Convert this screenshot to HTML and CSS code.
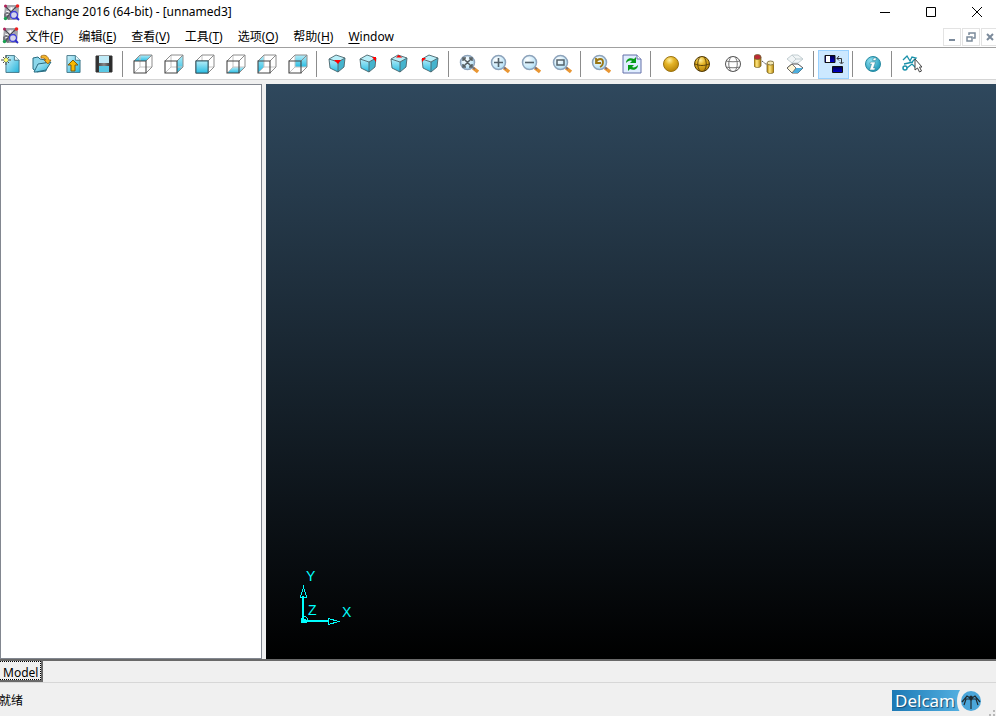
FILE: index.html
```html
<!DOCTYPE html>
<html lang="zh-CN">
<head>
<meta charset="utf-8">
<title>Exchange 2016 (64-bit) - [unnamed3]</title>
<link rel="stylesheet" href="styles.css">
</head>
<body>
<svg class="defs" aria-hidden="true">
  <defs>
    <linearGradient id="cyan" x1="0" y1="0" x2="1" y2="1"><stop offset="0" stop-color="#d3f3fb"/><stop offset="1" stop-color="#22b4dc"/></linearGradient>
    <linearGradient id="face" x1="0" y1="0" x2="0" y2="1"><stop offset="0" stop-color="#b4edf9"/><stop offset="1" stop-color="#28bce2"/></linearGradient>
    <linearGradient id="steel" x1="0" y1="0" x2="1" y2="0"><stop offset="0" stop-color="#333"/><stop offset=".5" stop-color="#888"/><stop offset="1" stop-color="#222"/></linearGradient>
    <linearGradient id="tube" x1="0" y1="0" x2="1" y2="0"><stop offset="0" stop-color="#b88700"/><stop offset=".4" stop-color="#ffe680"/><stop offset="1" stop-color="#a87800"/></linearGradient>
    <linearGradient id="navy" x1="0" y1="0" x2="0" y2="1"><stop offset="0" stop-color="#000040"/><stop offset="1" stop-color="#0000d8"/></linearGradient>
    <radialGradient id="gold" cx=".4" cy=".25" r=".75"><stop offset="0" stop-color="#fff0a0"/><stop offset=".4" stop-color="#e5b528"/><stop offset="1" stop-color="#b98508"/></radialGradient>
    <radialGradient id="glass" cx=".35" cy=".3" r=".8"><stop offset="0" stop-color="#fff"/><stop offset="1" stop-color="#a9dcf5"/></radialGradient>
    <radialGradient id="info" cx=".35" cy=".3" r=".8"><stop offset="0" stop-color="#8fe0f0"/><stop offset="1" stop-color="#1593b5"/></radialGradient>
    <symbol id="app" viewBox="0 0 17 17">
      <path d="M2 1h12l2 3-1 12H5L1 12z" fill="#a4a4aa"/>
      <path d="M1 10l6-4 3 5-4 5-5-3z" fill="#77777f"/>
      <path d="M4 4l7-1 1 3-6 3z" fill="#e4e4e6"/><path d="M3 7l3 1M3 11l4-1M8 3l1 3" stroke="#fff"/>
      <path d="M14 2L8 8l-5 7M2 2l6 6" stroke="#4a4a55" stroke-width="1.2" fill="none"/>
      <circle cx="11" cy="11" r="3.500" fill="#d5d5ea" stroke="#4040d8" stroke-width="1.300"/>
      <path d="M13 13l3 3" stroke="#2a2acb" stroke-width="1.800"/>
      <circle cx="2.500" cy="2" r="1.500" fill="#b02058"/><circle cx="14.500" cy="2" r="1.800" fill="#e22"/><circle cx="2.500" cy="14.500" r="1.700" fill="#18a050"/>
    </symbol>
    <symbol id="wire" viewBox="0 0 20 20">
      <path d="M7 13V1M7 13h12M7 13l-6 6" fill="none" stroke="#c4c4c4"/>
      <path d="M1 7l6-6h12v12l-6 6M13 7l6-6" fill="none" stroke="#8c8c8c"/>
      <path d="M1 7h12v12H1z" fill="none" stroke="#444" stroke-width="1.100"/>
    </symbol>
    <symbol id="cube" viewBox="0 0 20 20">
      <path d="M2 5l7-4 9 3-7 4z" fill="#b9eff9"/><path d="M2 5l9 3v10l-8-4z" fill="url(#face)"/><path d="M11 8l7-4-1 9-6 5z" fill="#45b4ce"/>
      <path d="M2 5l7-4 9 3-1 9-6 5-8-4zM2 5l9 3 7-4M11 8v10" fill="none" stroke="#4a646c" stroke-width=".9"/>
    </symbol>
    <symbol id="lens" viewBox="0 0 20 20">
      <path d="M14 14l5 4" stroke="#e99633" stroke-width="3.500"/><path d="M13 13l3 2" stroke="#806f72" stroke-width="2"/>
      <circle cx="8.500" cy="8.500" r="7" fill="url(#glass)" stroke="#8da3bb" stroke-width="1.500"/>
    </symbol>
    <symbol id="sheet" viewBox="0 0 16 20"><path d="M1 1h9l5 5v13H1z" fill="url(#cyan)" stroke="#437687"/><path d="M10 1v5h5" fill="#e5f8fc" stroke="#437687"/></symbol>
  </defs>
</svg>

<header class="titlebar">
  <svg class="app-icon"><use href="#app"/></svg>
  <h1 class="title">Exchange 2016 (64-bit) - [unnamed3]</h1>
  <div class="caption-buttons">
    <button type="button" aria-label="Minimize"><svg viewBox="0 0 12 12"><path d="M1 6.500h10" /></svg></button>
    <button type="button" aria-label="Maximize"><svg viewBox="0 0 12 12"><path d="M1.500 1.500h9v9h-9z"/></svg></button>
    <button type="button" aria-label="Close"><svg viewBox="0 0 12 12"><path d="M1 1l10 10M11 1L1 11"/></svg></button>
  </div>
</header>

<nav class="menubar">
  <svg class="app-icon"><use href="#app"/></svg>
  <div class="menus">
    <button type="button">文件(<u>F</u>)</button>
    <button type="button">编辑(<u>E</u>)</button>
    <button type="button">查看(<u>V</u>)</button>
    <button type="button">工具(<u>T</u>)</button>
    <button type="button">选项(<u>O</u>)</button>
    <button type="button">帮助(<u>H</u>)</button>
    <button type="button"><u>W</u>indow</button>
  </div>
  <div class="child-buttons">
    <button type="button" aria-label="Minimize document"><svg viewBox="0 0 10 10"><path d="M2 8h6"/></svg></button>
    <button type="button" aria-label="Restore document"><svg viewBox="0 0 10 10"><path d="M3 3V1h6v5H7" stroke-width="1.500"/><path d="M1 5h5v4H1z" stroke-width="1.500"/></svg></button>
    <button type="button" aria-label="Close document"><svg viewBox="0 0 10 10"><path d="M2 2l6 6M8 2L2 8"/></svg></button>
  </div>
</nav>

<div class="toolbar" role="toolbar">
  <div class="group">
    <button type="button" aria-label="New"><svg viewBox="0 0 20 20"><use href="#sheet" x="4" y="0" width="15" height="20"/><path d="M5 1v10M0 6h10M2 3l6 6M8 3L2 9" stroke="#4c4c40"/><circle cx="5" cy="6" r="2" fill="#ffff70"/></svg></button>
    <button type="button" aria-label="Open"><svg viewBox="0 0 20 20"><path d="M1 4l5-1 2 2 6 1v11l-9 1-4-3z" fill="#8cd7eb" stroke="#286b80"/><path d="M2 18L6 10l13-2-5 8-10 2z" fill="url(#cyan)" stroke="#286b80"/><path d="M9 2c4-2 7 0 8 4h2l-3 4-4-4h2c-1-2-3-2-5-2z" fill="#f5b528" stroke="#996514" stroke-width=".8"/></svg></button>
    <button type="button" aria-label="Import"><svg viewBox="0 0 20 20"><use href="#sheet" x="3" y="0" width="15" height="20"/><path d="M10 6l5 5h-3v6H8v-6H5z" fill="#f8b900" stroke="#7b5b12"/></svg></button>
    <button type="button" aria-label="Save"><svg viewBox="0 0 20 20"><path d="M2 2h16v16H2z" fill="url(#steel)" stroke="#333"/><path d="M5 2h10v7H5z" fill="#bfeaf6"/><path d="M5 12h10v6H5z" fill="#5ac8e4"/><path d="M4 2v16M16 2v16" stroke="#222"/></svg></button>
  </div>
  <div class="group">
    <button type="button" aria-label="Top view"><svg viewBox="0 0 20 20"><path d="M1 7l6-6h12l-6 6z" fill="url(#face)"/><use href="#wire" width="20" height="20"/></svg></button>
    <button type="button" aria-label="Right view"><svg viewBox="0 0 20 20"><path d="M13 7l6-6v12l-6 6z" fill="url(#face)"/><use href="#wire" width="20" height="20"/></svg></button>
    <button type="button" aria-label="Front view"><svg viewBox="0 0 20 20"><use href="#wire" width="20" height="20"/><path d="M1 7h12v12H1z" fill="url(#face)" stroke="#34616e"/></svg></button>
    <button type="button" aria-label="Bottom view"><svg viewBox="0 0 20 20"><path d="M1 19l6-6h12l-6 6z" fill="url(#face)"/><use href="#wire" width="20" height="20"/></svg></button>
    <button type="button" aria-label="Left view"><svg viewBox="0 0 20 20"><path d="M1 7l6-6v12l-6 6z" fill="url(#face)"/><use href="#wire" width="20" height="20"/></svg></button>
    <button type="button" aria-label="Back view"><svg viewBox="0 0 20 20"><path d="M7 1h12v12H7z" fill="url(#face)"/><use href="#wire" width="20" height="20"/></svg></button>
  </div>
  <div class="group">
    <button type="button" aria-label="Isometric 1"><svg viewBox="0 0 20 20"><use href="#cube" width="20" height="20"/><path d="M7 6h7l-3 4z" fill="#f00"/></svg></button>
    <button type="button" aria-label="Isometric 2"><svg viewBox="0 0 20 20"><use href="#cube" width="20" height="20"/><path d="M14 3h4v5z" fill="#f00"/></svg></button>
    <button type="button" aria-label="Isometric 3"><svg viewBox="0 0 20 20"><use href="#cube" width="20" height="20"/><path d="M7 3.500L9.500 1l4 2.500z" fill="#f00"/></svg></button>
    <button type="button" aria-label="Isometric 4"><svg viewBox="0 0 20 20"><use href="#cube" width="20" height="20"/><path d="M2 4h4L2 8z" fill="#f00"/></svg></button>
  </div>
  <div class="group">
    <button type="button" aria-label="Zoom to fit"><svg viewBox="0 0 20 20"><use href="#lens" width="20" height="20"/><path d="M5 5l7 7M12 5l-7 7M4 7V4h3M10 4h3v3M13 10v3h-3M7 13H4v-3" fill="none" stroke="#555e60" stroke-width="1.500"/></svg></button>
    <button type="button" aria-label="Zoom in"><svg viewBox="0 0 20 20"><use href="#lens" width="20" height="20"/><path d="M8.500 4v9M4 8.500h9" stroke="#53626b" stroke-width="1.600"/></svg></button>
    <button type="button" aria-label="Zoom out"><svg viewBox="0 0 20 20"><use href="#lens" width="20" height="20"/><path d="M4 8.500h9" stroke="#53626b" stroke-width="1.600"/></svg></button>
    <button type="button" aria-label="Zoom box"><svg viewBox="0 0 20 20"><use href="#lens" width="20" height="20"/><path d="M5 6h7v5H5z" fill="none" stroke="#53626b" stroke-width="1.500"/></svg></button>
  </div>
  <div class="group">
    <button type="button" aria-label="Previous view"><svg viewBox="0 0 20 20"><use href="#lens" width="20" height="20"/><path d="M5 4v5h5M5 8c2-4 7-4 7 0 0 2-1 4-3 5" fill="none" stroke="#9a7714" stroke-width="1.800"/></svg></button>
    <button type="button" aria-label="Refresh"><svg viewBox="0 0 20 20"><path d="M1 1h14l4 4v14H1z" fill="#e0edff" stroke="#6470a9"/><path d="M15 1v4h4" fill="#fff" stroke="#6470a9"/><path d="M4 9c0-4 4-6 8-4l2-2v6H8l2-2c-2-1-4 0-6 2zM16 11c0 4-4 6-8 4l-2 2v-6h6l-2 2c2 1 4 0 6-2z" fill="#079c18"/></svg></button>
  </div>
  <div class="group">
    <button type="button" aria-label="Shaded"><svg viewBox="0 0 20 20"><circle cx="10" cy="10" r="7.500" fill="url(#gold)" stroke="#9c7412"/></svg></button>
    <button type="button" aria-label="Shaded wireframe"><svg viewBox="0 0 20 20"><circle cx="10" cy="10" r="7.500" fill="url(#gold)" stroke="#533c08"/><path d="M8 3c-3 4-3 10 0 14M12 3c3 4 3 10 0 14M3 10c5 2 9 2 14 0" fill="none" stroke="#533c08" stroke-width=".9"/></svg></button>
    <button type="button" aria-label="Wireframe"><svg viewBox="0 0 20 20"><circle cx="10" cy="10" r="7.500" fill="#fff" stroke="#555"/><path d="M8 3c-3 4-3 10 0 14M12 3c3 4 3 10 0 14M3 7c4 1 10 1 14 0M3 13c4 1 10 1 14 0" fill="none" stroke="#666" stroke-width=".9"/></svg></button>
    <button type="button" aria-label="Convert solid"><svg viewBox="0 0 20 20"><path d="M0 3v9c1 2 6 2 7 0V3z" fill="url(#tube)" stroke="#71612f" stroke-width=".8"/><ellipse cx="3.500" cy="3" rx="3.500" ry="2.500" fill="#be2a35" stroke="#71612f" stroke-width=".8"/><path d="M8 7l5 4" stroke="#555" stroke-dasharray="2 1"/><path d="M13 9v9c1 2 6 2 7 0V9z" fill="url(#tube)" stroke="#71612f" stroke-width=".8"/><ellipse cx="16.500" cy="9" rx="3.500" ry="2" fill="#f4e8b4" stroke="#71612f" stroke-width=".8"/></svg></button>
    <button type="button" aria-label="Blank"><svg viewBox="0 0 20 20"><path d="M2 5l5-4h6l5 4-5 4H7z" fill="#f1f5f6" stroke="#c3ced2"/><path d="M7 1l4 4-4 4M11 5h7" fill="none" stroke="#c3ced2"/><path d="M2 14l5-4h6l5 4-5 5H7z" fill="#fff" stroke="#555"/><path d="M11 14h7l-5 5H7z" fill="#4caede"/><path d="M2 14l5-4 4 4-4 5z" fill="#fff6d6" stroke="#555" stroke-width=".8"/></svg></button>
  </div>
  <div class="group">
    <button type="button" class="selected" aria-pressed="true" aria-label="Swap background"><svg viewBox="0 0 20 20"><path d="M1 1.500h10v7H1z" fill="url(#navy)" stroke="#111"/><path d="M2 2h4v6H2z" fill="#fff"/><path d="M13 4.500h4.500V9M15 2l-2 2.500 2 2M15.500 8l2 2 2-2" fill="none" stroke="#333"/><path d="M8.500 12.500h10v6h-10z" fill="url(#navy)" stroke="#111"/></svg></button>
  </div>
  <div class="group">
    <button type="button" aria-label="Information"><svg viewBox="0 0 20 20"><circle cx="10" cy="10" r="7.500" fill="url(#info)" stroke="#298ba2"/><path d="M10.500 4h3l-.8 2.500h-3zM7.500 8h5l-2 6h2l-1 2h-5l2-6h-2z" fill="#fff" stroke="#23798c" stroke-width=".5"/></svg></button>
  </div>
  <div class="group">
    <button type="button" aria-label="Select geometry"><svg viewBox="0 0 20 20"><path d="M1 6l4-4 3 5 2-4 4 1-4 4M2 10l9-2M5 14l5-4 4 4" fill="none" stroke="#1991aa" stroke-width="1.300"/><circle cx="3" cy="14" r="2" fill="#fff" stroke="#1991aa" stroke-width="1.500"/><path d="M13 5v11l2.500-2 2 4 2-1-2-4h2.500z" fill="#fff" stroke="#444"/></svg></button>
  </div>
</div>

<main class="workspace">
  <section class="tree" aria-label="Model tree"></section>
  <section class="view" aria-label="Graphics view">
    <svg class="axes" viewBox="0 0 60 60" shape-rendering="crispEdges">
      <g fill="none" stroke="#0ff"><path d="M8 52V27M8 52h25" stroke-width="2"/><path d="M8.500 18l-3 10h6zM43.500 52.500l-10-3v6z"/><circle cx="9.500" cy="50.500" r="3"/></g><path d="M6 50h5v4H6z" fill="#0ff"/>
      <text x="11" y="12">Y</text><text x="13" y="46">Z</text><text x="47" y="48">X</text>
    </svg>
  </section>
</main>

<div class="tabs" role="tablist"><button type="button" role="tab" aria-selected="true"><span>Model</span></button></div>

<footer class="status">
  <span class="ready">就绪</span>
  <div class="brand">
    <span>Delcam</span>
    <svg viewBox="0 0 26 22"><path d="M5 0C1 6 1 16 5 22H26V0z" fill="#f0f0f0"/><circle cx="16" cy="11" r="10" fill="#4ba6da"/><path d="M16 9v10M15 8l-3-2-5 6M14 9l-3 0-2 6M17 8l3-2 5 6M18 9l3 0 2 6" fill="none" stroke="#202b31" stroke-width="1.200"/><ellipse cx="16" cy="8" rx="2" ry="2.500" fill="#202b31"/></svg>
  </div>
  <svg class="grip" viewBox="0 0 6 6"><path d="M4 0h2v2H4zM0 4h2v2H0zM4 4h2v2H4z" fill="#b8b8b8"/></svg>
</footer>
</body>
</html>
```
FILE: styles.css
```css
* { box-sizing: border-box; }
body {
  margin: 0;
  height: 100vh;
  display: flex;
  flex-direction: column;
  overflow: hidden;
  background: #f0f0f0;
  color: #000;
  font: 12px/16px "Noto Sans", "Noto Sans CJK SC", sans-serif;
}
button {
  margin: 0;
  padding: 0;
  border: 0;
  background: none;
  color: inherit;
  font: inherit;
}
svg { display: block; flex: none; }
.defs { position: absolute; width: 0; height: 0; }
.app-icon { width: 17px; height: 17px; }

.titlebar {
  height: 24px;
  flex: none;
  display: flex;
  align-items: center;
  padding-left: 3px;
  gap: 5px;
  background: #fff;
}
.title { margin: 0; font-size: 12px; font-weight: 400; white-space: nowrap; }
.caption-buttons { display: flex; margin-left: auto; margin-right: -4px; }
.caption-buttons button { width: 46px; height: 24px; display: grid; place-items: center; }
.caption-buttons svg { width: 12px; height: 12px; fill: none; stroke: #000; }

.menubar {
  height: 24px;
  flex: none;
  display: flex;
  align-items: center;
  padding-left: 2px;
  background: #fff;
  border-bottom: 1px solid #a0a0a0;
}
.menus { display: flex; gap: 15px; margin-left: 7px; padding-top: 2px; white-space: nowrap; }
.menus u { text-underline-offset: 2px; }
.child-buttons { display: flex; gap: 1px; margin-left: auto; margin-right: -3px; padding-top: 2px; }
.child-buttons button {
  width: 18px;
  height: 18px;
  display: grid;
  place-items: center;
  border: 1px solid #e3e3e3;
}
.child-buttons svg { width: 10px; height: 10px; fill: none; stroke: #7b8a9b; stroke-width: 2; }

.toolbar {
  height: 32px;
  flex: none;
  display: flex;
  align-items: center;
  padding-top: 1px;
  background: #fff;
  border-bottom: 1px solid #d5d5d5;
  margin-bottom: 4px;
}
.group { display: flex; align-items: center; }
.group:first-child { margin-left: -5px; }
.group + .group::before {
  content: "";
  width: 1px;
  height: 26px;
  margin: 0 4px 0 3px;
  background: #8c8c8c;
}
.group button { width: 31px; height: 29px; display: grid; place-items: center; }
.group svg { width: 20px; height: 20px; }
.group .selected { background: #cce8ff; border: 1px solid #99d1ff; }

.workspace { flex: 1; min-height: 0; display: grid; grid-template-columns: 262px 1fr; gap: 4px; }
.tree { background: #fff; border: 1px solid #828790; }
.view {
  display: flex;
  align-items: flex-end;
  padding: 0 0 30px 29px;
  background: linear-gradient(#2f485d, #000);
}
.axes { width: 60px; height: 60px; }
.axes text { fill: #0ff; font: 14px "Liberation Sans", sans-serif; }

.tabs { height: 24px; flex: none; display: flex; align-items: flex-start; border-top: 2px solid #696969; border-bottom: 1px solid #d7d7d7; }
.tabs button {
  height: 21px;
  border-right: 2px solid #696969;
  border-bottom: 2px solid #696969;
}
.tabs span { display: block; height: 19px; padding: 3px 2px 0 3px; line-height: 16px; border: 1px dotted #000; border-width: 1px 1px 1px 0; }

.status { height: 33px; flex: none; display: flex; align-items: center; position: relative; padding-top: 2px; }
.ready { margin-left: -1px; }
.brand {
  height: 21px;
  display: flex;
  align-items: center;
  margin-left: auto;
  margin-right: 15px;
  padding-left: 3px;
  background: linear-gradient(90deg, #1c79b5, #64c0ee);
  color: #fff;
  font-size: 17px;
  line-height: 21px;
  text-shadow: 1px 1px 1px #164d75;
}
.brand svg { width: 26px; height: 22px; }
.grip { position: absolute; right: 1px; bottom: 0; width: 6px; height: 6px; }
```
